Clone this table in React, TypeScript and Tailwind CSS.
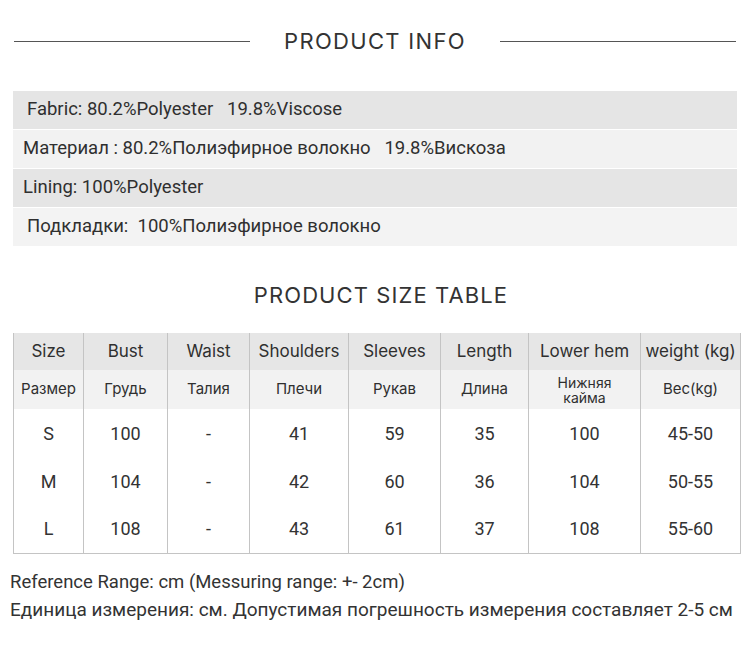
const infoRows = [
  { text: 'Fabric: 80.2%Polyester   19.8%Viscose', bg: 'bg-[#e5e5e5]', pad: 'pl-[14px]' },
  { text: 'Материал : 80.2%Полиэфирное волокно   19.8%Вискоза', bg: 'bg-[#f2f2f2]', pad: 'pl-[10px]' },
  { text: 'Lining: 100%Polyester', bg: 'bg-[#e5e5e5]', pad: 'pl-[10px]' },
  { text: 'Подкладки:  100%Полиэфирное волокно', bg: 'bg-[#f3f3f3]', pad: 'pl-[14px]' },
];

const widths = ['w-[70px]', 'w-[84px]', 'w-[82px]', 'w-[99px]', 'w-[92px]', 'w-[88px]', 'w-[112px]', 'w-[100px]'];

const headEn = ['Size', 'Bust', 'Waist', 'Shoulders', 'Sleeves', 'Length', 'Lower hem', 'weight (kg)'];
const headRu = ['Размер', 'Грудь', 'Талия', 'Плечи', 'Рукав', 'Длина', 'Нижняя\nкайма', 'Вес(kg)'];

const sizes = [
  ['S', '100', '-', '41', '59', '35', '100', '45-50'],
  ['M', '104', '-', '42', '60', '36', '104', '50-55'],
  ['L', '108', '-', '43', '61', '37', '108', '55-60'],
];

export default function App() {
  return (
    <div className="w-[750px] h-[647px] bg-white text-[#2f2f2f] overflow-hidden">
      <div className="flex h-[82px] items-center px-[14px]">
        <div className="h-px flex-1 bg-[#555]" />
        <h2 className="px-[34px] font-['Inter',sans-serif] text-[22px] tracking-[0.06em] text-[#333]">
          PRODUCT INFO
        </h2>
        <div className="h-px flex-1 bg-[#555]" />
      </div>

      <div className="mx-[13px] mt-[9px] flex flex-col gap-[1px] font-['Roboto',sans-serif] text-[18.5px]">
        {infoRows.map((r) => (
          <div key={r.text} className={`flex h-[38px] items-center whitespace-pre ${r.bg} ${r.pad}`}>
            {r.text}
          </div>
        ))}
      </div>

      <h2 className="mt-[34px] h-[30px] text-center font-['Inter',sans-serif] text-[22px] leading-[30px] tracking-[0.05em] text-[#333] pl-[12px]">
        PRODUCT SIZE TABLE
      </h2>

      <table className="ml-[13px] mt-[23px] border-collapse text-center">
        <thead>
          <tr className="h-[37px] bg-[#e6e6e6] font-['Inter',sans-serif] text-[17px]">
            {headEn.map((h, i) => (
              <th key={h} className={`${widths[i]} border-x border-[#c4c4c4] p-0 font-normal`}>
                {h}
              </th>
            ))}
          </tr>
          <tr className="h-[39px] bg-[#f2f2f2] font-['Inter',sans-serif] text-[15px]">
            {headRu.map((h, i) => (
              <th
                key={h}
                className={`${widths[i]} border-x border-[#c4c4c4] p-0 font-normal whitespace-pre-line ${
                  i === 6 ? 'text-[14px] leading-[15px]' : ''
                }`}
              >
                {h}
              </th>
            ))}
          </tr>
        </thead>
        <tbody className="font-['Roboto',sans-serif] text-[18px] text-[#333]">
          {sizes.map((row, ri) => (
            <tr key={row[0]} className={`h-[48px] ${ri === 2 ? 'border-b border-[#c4c4c4]' : ''}`}>
              {row.map((c, i) => (
                <td key={i} className="border-x border-[#c4c4c4] p-0">
                  {c}
                </td>
              ))}
            </tr>
          ))}
        </tbody>
      </table>

      <div className="mt-[14px] pl-[10px] font-['Roboto',sans-serif] leading-[28px] text-[#333]">
        <p className="text-[18.5px]">Reference Range: cm (Messuring range: +- 2cm)</p>
        <p className="text-[19px]">Единица измерения: см. Допустимая погрешность измерения составляет 2-5 см</p>
      </div>
    </div>
  );
}
